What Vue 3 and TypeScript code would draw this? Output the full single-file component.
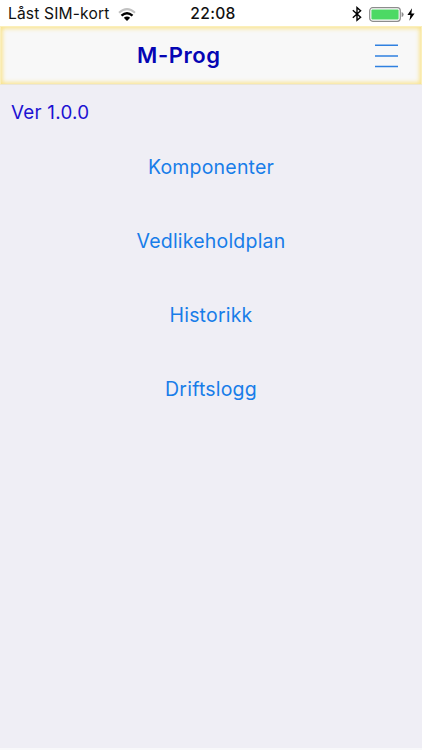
<script setup lang="ts">
const items: string[] = ['Komponenter', 'Vedlikeholdplan', 'Historikk', 'Driftslogg']
</script>

<template>
  <div class="screen">
    <div class="status">
      <div class="carrier">
        <span class="carrier-name">Låst SIM-kort</span>
        <svg class="wifi" width="18" height="13" viewBox="0 0 18 13">
          <path d="M1 4.7 Q9 -2.3 17 4.7" fill="none" stroke="#c2c2c2" stroke-width="2.1" />
          <path d="M3.5 7.7 Q9 2.9 14.5 7.7" fill="none" stroke="#000" stroke-width="2.4" />
          <path d="M5.8 9.8 Q9 7.1 12.2 9.8 L9 12.9 Z" fill="#000" />
        </svg>
      </div>
      <span class="clock">22:08</span>
      <div class="indicators">
        <svg class="bluetooth" width="10" height="16" viewBox="0 0 10 16">
          <path d="M0.8 4.3 L8.6 11.2 L5 14.2 V1.6 L8.6 4.7 L0.8 11.7" fill="none" stroke="#000" stroke-width="1.4" />
        </svg>
        <svg class="battery" width="36" height="15" viewBox="0 0 36 15">
          <rect x="0.7" y="0.7" width="30.6" height="13.6" rx="3" fill="#fff" stroke="#8c8c8c" stroke-width="1.2" />
          <rect x="2.4" y="2.4" width="27.2" height="10.2" rx="1" fill="#4cd964" />
          <path d="M32.6 5 Q34.6 5.5 34.6 7.5 Q34.6 9.5 32.6 10 Z" fill="#8c8c8c" />
        </svg>
        <svg class="bolt" width="8" height="13" viewBox="0 0 8 13">
          <path d="M5 0.3 L0.4 7 H3.4 L2.4 12.7 L7.6 5.6 H4.4 Z" fill="#000" />
        </svg>
      </div>
    </div>
    <header class="navbar">
      <h1 class="title">M-Prog</h1>
      <button class="menu" aria-label="Meny">
        <svg class="bars" width="23" height="24" viewBox="0 0 23 24">
          <path d="M0 1.2 H23 M0 11.9 H23 M0 22.4 H23" fill="none" stroke="#2f80e0" stroke-width="1.5" />
        </svg>
      </button>
    </header>
    <main class="content">
      <p class="version">Ver 1.0.0</p>
      <nav class="links">
        <a v-for="item in items" :key="item" class="link">{{ item }}</a>
      </nav>
    </main>
  </div>
</template>

<style>
body {
  background: #f7f7f9;
}
</style>

<style scoped>
.screen {
  display: flex;
  flex-direction: column;
  width: 422px;
  height: 750px;
  overflow: hidden;
  box-sizing: border-box;
  border-bottom: 2px solid #f8f8fa;
  background: #efeef5;
  font-family: Inter, "Liberation Sans", sans-serif;
}
.status {
  flex: none;
  display: grid;
  grid-template-columns: 1fr auto 1fr;
  align-items: center;
  height: 26px;
  padding: 1px 7px 0 8px;
  box-sizing: border-box;
  background: #fff;
  color: #111;
}
.carrier {
  display: flex;
  align-items: center;
  gap: 9px;
}
.carrier-name {
  font-size: 15.6px;
  line-height: 26px;
  letter-spacing: 0.15px;
  white-space: nowrap;
}
.clock {
  padding-left: 3px;
  font-size: 15.6px;
  font-weight: 550;
  line-height: 26px;
  letter-spacing: 0.3px;
}
.indicators {
  display: flex;
  align-items: center;
  justify-content: flex-end;
}
.bluetooth {
  margin-right: 7px;
}
.bolt {
  margin-left: 2px;
}
.navbar {
  flex: none;
  display: flex;
  align-items: center;
  justify-content: space-between;
  height: 59px;
  box-sizing: border-box;
  padding: 0 23px 0 136px;
  background: #f8f8f8;
  border: 1px solid #fbefba;
  border-bottom-color: #eae5d8;
  box-shadow: inset 0 0 4px 1.5px #f9e288;
}
.title {
  margin: 0 0 2px;
  color: #0505b4;
  font-size: 22px;
  font-weight: 620;
  line-height: 30px;
  letter-spacing: 0.6px;
}
.menu {
  display: flex;
  padding: 0;
  border: 0;
  background: none;
}
.content {
  display: flex;
  flex-direction: column;
}
.version {
  margin: 16px 0 0 11px;
  color: #1d12d2;
  font-size: 18.8px;
  line-height: 24px;
  letter-spacing: 0.25px;
}
.links {
  display: flex;
  flex-direction: column;
  align-items: center;
  padding-top: 5px;
}
.link {
  color: #187de9;
  font-size: 19.5px;
  line-height: 74px;
  letter-spacing: 0.2px;
}
</style>
